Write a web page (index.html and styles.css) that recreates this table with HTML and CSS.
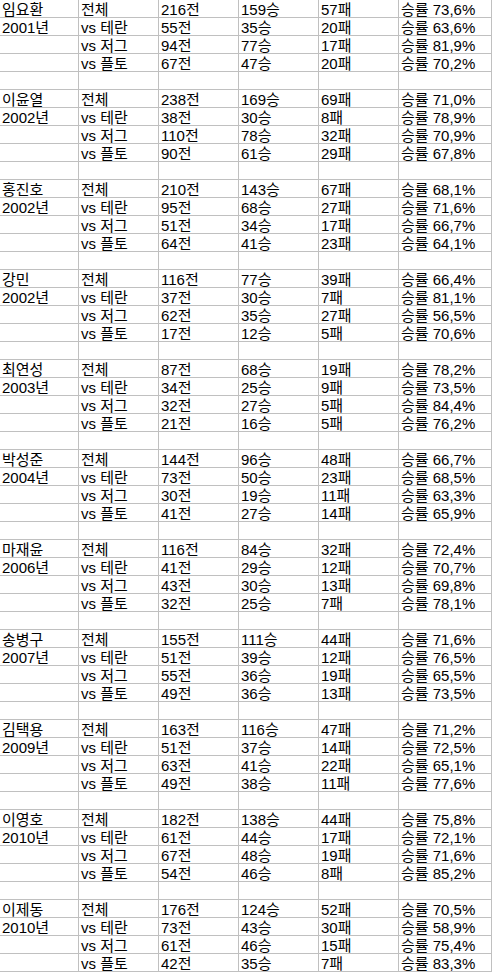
FILE: index.html
```html
<!DOCTYPE html>
<html lang="ko">
<head>
<meta charset="utf-8">
<title>승률표</title>
<link rel="stylesheet" href="styles.css">
</head>
<body>
<div class="sheet">
<div class="row"><div class="c">임요환</div><div class="c">전체</div><div class="c">216전</div><div class="c">159승</div><div class="c">57패</div><div class="c">승률 73,6%</div></div>
<div class="row"><div class="c">2001년</div><div class="c">vs 테란</div><div class="c">55전</div><div class="c">35승</div><div class="c">20패</div><div class="c">승률 63,6%</div></div>
<div class="row"><div class="c"></div><div class="c">vs 저그</div><div class="c">94전</div><div class="c">77승</div><div class="c">17패</div><div class="c">승률 81,9%</div></div>
<div class="row"><div class="c"></div><div class="c">vs 플토</div><div class="c">67전</div><div class="c">47승</div><div class="c">20패</div><div class="c">승률 70,2%</div></div>
<div class="row"><div class="c"></div><div class="c"></div><div class="c"></div><div class="c"></div><div class="c"></div><div class="c"></div></div>

<div class="row"><div class="c">이윤열</div><div class="c">전체</div><div class="c">238전</div><div class="c">169승</div><div class="c">69패</div><div class="c">승률 71,0%</div></div>
<div class="row"><div class="c">2002년</div><div class="c">vs 테란</div><div class="c">38전</div><div class="c">30승</div><div class="c">8패</div><div class="c">승률 78,9%</div></div>
<div class="row"><div class="c"></div><div class="c">vs 저그</div><div class="c">110전</div><div class="c">78승</div><div class="c">32패</div><div class="c">승률 70,9%</div></div>
<div class="row"><div class="c"></div><div class="c">vs 플토</div><div class="c">90전</div><div class="c">61승</div><div class="c">29패</div><div class="c">승률 67,8%</div></div>
<div class="row"><div class="c"></div><div class="c"></div><div class="c"></div><div class="c"></div><div class="c"></div><div class="c"></div></div>

<div class="row"><div class="c">홍진호</div><div class="c">전체</div><div class="c">210전</div><div class="c">143승</div><div class="c">67패</div><div class="c">승률 68,1%</div></div>
<div class="row"><div class="c">2002년</div><div class="c">vs 테란</div><div class="c">95전</div><div class="c">68승</div><div class="c">27패</div><div class="c">승률 71,6%</div></div>
<div class="row"><div class="c"></div><div class="c">vs 저그</div><div class="c">51전</div><div class="c">34승</div><div class="c">17패</div><div class="c">승률 66,7%</div></div>
<div class="row"><div class="c"></div><div class="c">vs 플토</div><div class="c">64전</div><div class="c">41승</div><div class="c">23패</div><div class="c">승률 64,1%</div></div>
<div class="row"><div class="c"></div><div class="c"></div><div class="c"></div><div class="c"></div><div class="c"></div><div class="c"></div></div>

<div class="row"><div class="c">강민</div><div class="c">전체</div><div class="c">116전</div><div class="c">77승</div><div class="c">39패</div><div class="c">승률 66,4%</div></div>
<div class="row"><div class="c">2002년</div><div class="c">vs 테란</div><div class="c">37전</div><div class="c">30승</div><div class="c">7패</div><div class="c">승률 81,1%</div></div>
<div class="row"><div class="c"></div><div class="c">vs 저그</div><div class="c">62전</div><div class="c">35승</div><div class="c">27패</div><div class="c">승률 56,5%</div></div>
<div class="row"><div class="c"></div><div class="c">vs 플토</div><div class="c">17전</div><div class="c">12승</div><div class="c">5패</div><div class="c">승률 70,6%</div></div>
<div class="row"><div class="c"></div><div class="c"></div><div class="c"></div><div class="c"></div><div class="c"></div><div class="c"></div></div>

<div class="row"><div class="c">최연성</div><div class="c">전체</div><div class="c">87전</div><div class="c">68승</div><div class="c">19패</div><div class="c">승률 78,2%</div></div>
<div class="row"><div class="c">2003년</div><div class="c">vs 테란</div><div class="c">34전</div><div class="c">25승</div><div class="c">9패</div><div class="c">승률 73,5%</div></div>
<div class="row"><div class="c"></div><div class="c">vs 저그</div><div class="c">32전</div><div class="c">27승</div><div class="c">5패</div><div class="c">승률 84,4%</div></div>
<div class="row"><div class="c"></div><div class="c">vs 플토</div><div class="c">21전</div><div class="c">16승</div><div class="c">5패</div><div class="c">승률 76,2%</div></div>
<div class="row"><div class="c"></div><div class="c"></div><div class="c"></div><div class="c"></div><div class="c"></div><div class="c"></div></div>

<div class="row"><div class="c">박성준</div><div class="c">전체</div><div class="c">144전</div><div class="c">96승</div><div class="c">48패</div><div class="c">승률 66,7%</div></div>
<div class="row"><div class="c">2004년</div><div class="c">vs 테란</div><div class="c">73전</div><div class="c">50승</div><div class="c">23패</div><div class="c">승률 68,5%</div></div>
<div class="row"><div class="c"></div><div class="c">vs 저그</div><div class="c">30전</div><div class="c">19승</div><div class="c">11패</div><div class="c">승률 63,3%</div></div>
<div class="row"><div class="c"></div><div class="c">vs 플토</div><div class="c">41전</div><div class="c">27승</div><div class="c">14패</div><div class="c">승률 65,9%</div></div>
<div class="row"><div class="c"></div><div class="c"></div><div class="c"></div><div class="c"></div><div class="c"></div><div class="c"></div></div>

<div class="row"><div class="c">마재윤</div><div class="c">전체</div><div class="c">116전</div><div class="c">84승</div><div class="c">32패</div><div class="c">승률 72,4%</div></div>
<div class="row"><div class="c">2006년</div><div class="c">vs 테란</div><div class="c">41전</div><div class="c">29승</div><div class="c">12패</div><div class="c">승률 70,7%</div></div>
<div class="row"><div class="c"></div><div class="c">vs 저그</div><div class="c">43전</div><div class="c">30승</div><div class="c">13패</div><div class="c">승률 69,8%</div></div>
<div class="row"><div class="c"></div><div class="c">vs 플토</div><div class="c">32전</div><div class="c">25승</div><div class="c">7패</div><div class="c">승률 78,1%</div></div>
<div class="row"><div class="c"></div><div class="c"></div><div class="c"></div><div class="c"></div><div class="c"></div><div class="c"></div></div>

<div class="row"><div class="c">송병구</div><div class="c">전체</div><div class="c">155전</div><div class="c">111승</div><div class="c">44패</div><div class="c">승률 71,6%</div></div>
<div class="row"><div class="c">2007년</div><div class="c">vs 테란</div><div class="c">51전</div><div class="c">39승</div><div class="c">12패</div><div class="c">승률 76,5%</div></div>
<div class="row"><div class="c"></div><div class="c">vs 저그</div><div class="c">55전</div><div class="c">36승</div><div class="c">19패</div><div class="c">승률 65,5%</div></div>
<div class="row"><div class="c"></div><div class="c">vs 플토</div><div class="c">49전</div><div class="c">36승</div><div class="c">13패</div><div class="c">승률 73,5%</div></div>
<div class="row"><div class="c"></div><div class="c"></div><div class="c"></div><div class="c"></div><div class="c"></div><div class="c"></div></div>

<div class="row"><div class="c">김택용</div><div class="c">전체</div><div class="c">163전</div><div class="c">116승</div><div class="c">47패</div><div class="c">승률 71,2%</div></div>
<div class="row"><div class="c">2009년</div><div class="c">vs 테란</div><div class="c">51전</div><div class="c">37승</div><div class="c">14패</div><div class="c">승률 72,5%</div></div>
<div class="row"><div class="c"></div><div class="c">vs 저그</div><div class="c">63전</div><div class="c">41승</div><div class="c">22패</div><div class="c">승률 65,1%</div></div>
<div class="row"><div class="c"></div><div class="c">vs 플토</div><div class="c">49전</div><div class="c">38승</div><div class="c">11패</div><div class="c">승률 77,6%</div></div>
<div class="row"><div class="c"></div><div class="c"></div><div class="c"></div><div class="c"></div><div class="c"></div><div class="c"></div></div>

<div class="row"><div class="c">이영호</div><div class="c">전체</div><div class="c">182전</div><div class="c">138승</div><div class="c">44패</div><div class="c">승률 75,8%</div></div>
<div class="row"><div class="c">2010년</div><div class="c">vs 테란</div><div class="c">61전</div><div class="c">44승</div><div class="c">17패</div><div class="c">승률 72,1%</div></div>
<div class="row"><div class="c"></div><div class="c">vs 저그</div><div class="c">67전</div><div class="c">48승</div><div class="c">19패</div><div class="c">승률 71,6%</div></div>
<div class="row"><div class="c"></div><div class="c">vs 플토</div><div class="c">54전</div><div class="c">46승</div><div class="c">8패</div><div class="c">승률 85,2%</div></div>
<div class="row"><div class="c"></div><div class="c"></div><div class="c"></div><div class="c"></div><div class="c"></div><div class="c"></div></div>

<div class="row"><div class="c">이제동</div><div class="c">전체</div><div class="c">176전</div><div class="c">124승</div><div class="c">52패</div><div class="c">승률 70,5%</div></div>
<div class="row"><div class="c">2010년</div><div class="c">vs 테란</div><div class="c">73전</div><div class="c">43승</div><div class="c">30패</div><div class="c">승률 58,9%</div></div>
<div class="row"><div class="c"></div><div class="c">vs 저그</div><div class="c">61전</div><div class="c">46승</div><div class="c">15패</div><div class="c">승률 75,4%</div></div>
<div class="row"><div class="c"></div><div class="c">vs 플토</div><div class="c">42전</div><div class="c">35승</div><div class="c">7패</div><div class="c">승률 83,3%</div></div>
</div>
</body>
</html>
```

FILE: styles.css
```css
html, body {
  margin: 0;
  padding: 0;
  background: #ffffff;
}

.sheet {
  width: 493px;
}

.row {
  display: grid;
  grid-template-columns: 79px 80px 80px 80px 80px 93px;
  height: 18px;
}

.c {
  box-sizing: border-box;
  height: 18px;
  border-right: 1px solid #c0c0c0;
  border-bottom: 1px solid #c0c0c0;
  padding: 1px 0 0 2px;
  font-family: "Liberation Sans", "Noto Sans CJK KR", sans-serif;
  font-size: 15px;
  line-height: 17px;
  color: #000000;
  white-space: nowrap;
  overflow: hidden;
}
```
